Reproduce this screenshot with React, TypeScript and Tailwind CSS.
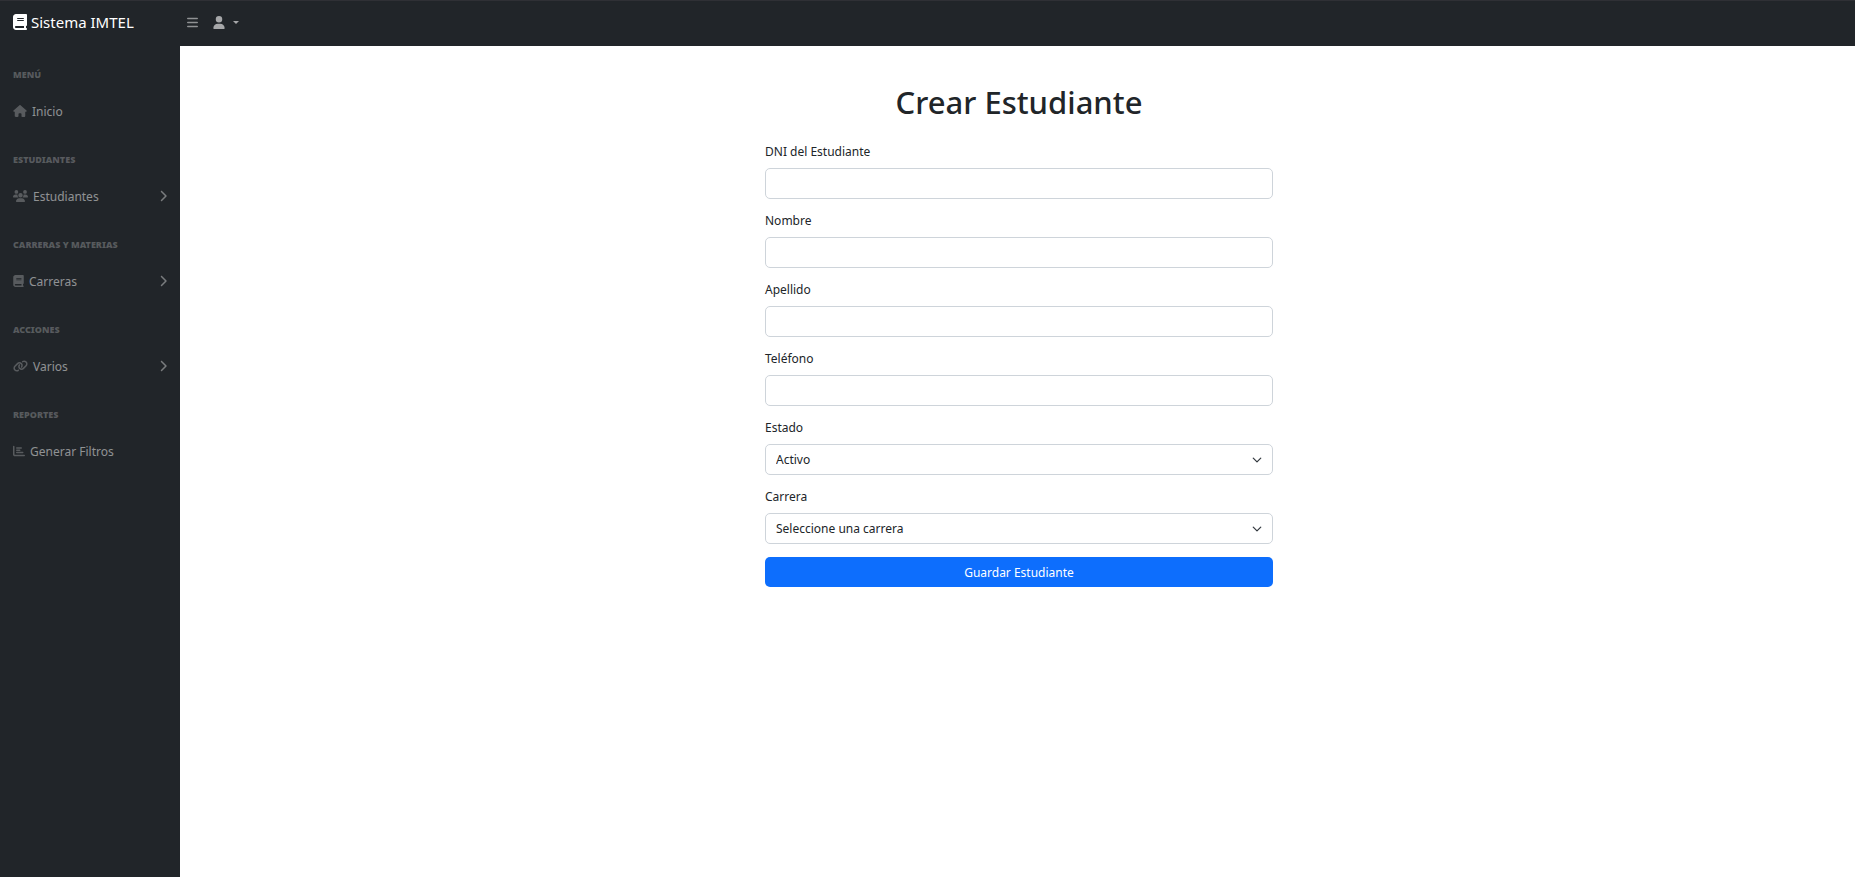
import type { ReactNode } from "react";
import { FaBars, FaBook, FaHouse, FaUser, FaUsers, FaLink, FaChartBar, FaChevronRight } from "react-icons/fa6";

function MenuHeading({ children }: { children: ReactNode }) {
  return <h2 className="px-[13px] pt-[22px] pb-[10px] text-[9px] leading-[15px] font-black uppercase text-white/25">{children}</h2>;
}

function MenuLink({ icon, label, expandable }: { icon: ReactNode; label: string; expandable?: boolean }) {
  return (
    <a href="#" className="flex h-[38px] items-center px-[13px] text-[12px] leading-[19px] text-white/50">
      <span className="mr-[5px] text-white/25">{icon}</span>
      {label}
      {expandable && <FaChevronRight className="ml-auto h-[12px] w-[8px] text-white/40" />}
    </a>
  );
}

function TextField({ id, label }: { id: string; label: string }) {
  return (
    <div>
      <label htmlFor={id} className="mb-[7px] block">{label}</label>
      <input id={id} type="text" className="block h-[31px] w-full rounded-[5px] border border-[#ced4da] px-[10px]" />
    </div>
  );
}

function SelectField({ id, label, options }: { id: string; label: string; options: string[] }) {
  return (
    <div>
      <label htmlFor={id} className="mb-[7px] block">{label}</label>
      <div className="relative">
        <select id={id} className="block h-[31px] w-full appearance-none rounded-[5px] border border-[#ced4da] bg-white px-[10px]">
          {options.map((o) => <option key={o}>{o}</option>)}
        </select>
        <svg viewBox="0 0 16 16" className="pointer-events-none absolute inset-y-0 right-[11px] my-auto size-[10px]" fill="none" stroke="#343a40" strokeWidth="2" strokeLinecap="round" strokeLinejoin="round">
          <path d="m2 5 6 6 6-6" />
        </svg>
      </div>
    </div>
  );
}

export default function App() {
  return (
    <div className="flex min-h-screen flex-col bg-white font-['Noto_Sans',sans-serif] text-[12px] leading-[19px] text-[#212529]">
      <header className="flex h-[46px] items-center border-t border-[#2f3035] bg-[#212529] pb-[2px]">
        <a href="#" className="flex w-[180px] items-center gap-[4px] pb-[2px] pl-[13px] text-[15px] leading-[24px] text-white">
          <FaBook className="h-[16px] w-[14px]" />
          Sistema IMTEL
        </a>
        <button type="button" aria-label="Menú" className="px-[7px] text-white/50">
          <FaBars className="h-[13px] w-[11px]" />
        </button>
        <button type="button" aria-label="Usuario" className="ml-[8px] flex items-center gap-[8px] text-white/60">
          <FaUser className="h-[13px] w-[12px]" />
          <svg viewBox="0 0 6 3" className="h-[3px] w-[6px]" fill="currentColor">
            <path d="M0 0h6L3 3z" />
          </svg>
        </button>
      </header>
      <div className="flex flex-1">
        <nav className="-mt-px w-[180px] shrink-0 bg-[#212529]">
          <MenuHeading>Menú</MenuHeading>
          <MenuLink icon={<FaHouse className="h-[12px] w-[14px]" />} label="Inicio" />
          <MenuHeading>Estudiantes</MenuHeading>
          <MenuLink icon={<FaUsers className="h-[12px] w-[15px]" />} label="Estudiantes" expandable />
          <MenuHeading>Carreras y Materias</MenuHeading>
          <MenuLink icon={<FaBook className="h-[12px] w-[11px]" />} label="Carreras" expandable />
          <MenuHeading>Acciones</MenuHeading>
          <MenuLink icon={<FaLink className="h-[12px] w-[15px]" />} label="Varios" expandable />
          <MenuHeading>Reportes</MenuHeading>
          <MenuLink icon={<FaChartBar className="size-[12px]" />} label="Generar Filtros" />
        </nav>
        <main className="flex-1 pt-[37px] pl-[3px]">
          <form className="mx-auto max-w-[508px]" onSubmit={(e) => e.preventDefault()}>
            <h1 className="mb-[21px] text-center text-[31px] leading-[38px] font-medium">Crear Estudiante</h1>
            <div className="flex flex-col gap-[12px]">
              <TextField id="dni" label="DNI del Estudiante" />
              <TextField id="nombre" label="Nombre" />
              <TextField id="apellido" label="Apellido" />
              <TextField id="telefono" label="Teléfono" />
              <SelectField id="estado" label="Estado" options={["Activo", "Inactivo"]} />
              <SelectField id="carrera" label="Carrera" options={["Seleccione una carrera"]} />
            </div>
            <button type="submit" className="mt-[13px] block h-[30px] w-full rounded-[5px] bg-[#0d6efd] text-white">Guardar Estudiante</button>
          </form>
        </main>
      </div>
    </div>
  );
}
